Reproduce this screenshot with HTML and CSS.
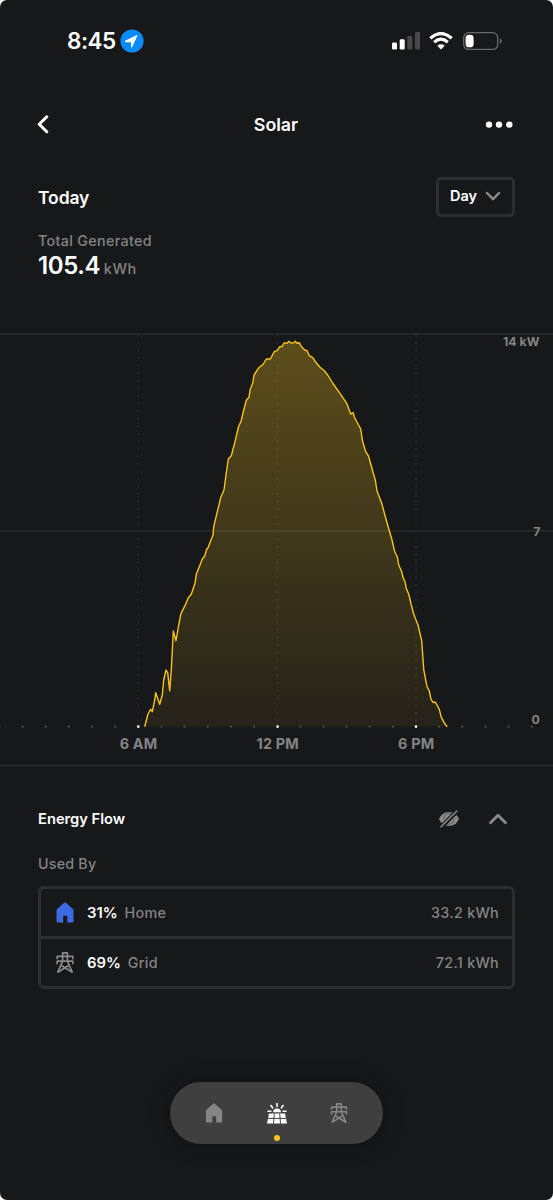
FILE: index.html
```html
<!DOCTYPE html>
<html lang="en">
<head>
    <meta charset="UTF-8">
    <meta name="viewport" content="width=device-width, initial-scale=1.0">
    <title>Solar</title>
    <link rel="stylesheet" href="styles.css">
</head>
<body>
    <!-- shared icons -->
    <svg class="sprite" width="0" height="0">
        <symbol id="icon-home" viewBox="0 0 18 21">
            <path d="M8 .8Q9 0 10 .8L16.900 7Q17.500 7.600 17.500 8.400V19.500Q17.500 20.500 16.500 20.500H11.300V14.500Q11.300 13.800 10.600 13.800H7.900Q7.200 13.800 7.200 14.500V20.500H1.500Q.5 20.500 .5 19.500V8.400Q.5 7.600 1.100 7Z" fill="currentColor"/>
        </symbol>
        <symbol id="icon-grid" viewBox="0 0 18 21">
            <path d="M6.600 9.200V.9H11.400V9.200M1.200 6.600V4.300H16.800V6.600M1.200 11.500V9.200H16.800V11.500M6.600 9.200L1.800 20.200L12.600 13.500M11.400 9.200L16.200 20.200L5.400 13.500" fill="none" stroke="currentColor" stroke-width="1.700" stroke-linejoin="round" stroke-linecap="round"/>
        </symbol>
    </svg>

    <div class="screen">
        <div class="status-bar">
            <div class="status-left">
                <span class="time">8:45</span>
                <svg width="24" height="24" viewBox="0 0 24 24">
                    <circle cx="12" cy="12" r="11.600" fill="#0a8cff"/>
                    <path d="M5.200 11.800L16.400 6.200Q17.800 5.600 17.200 7L12.200 18Q11.300 19.300 11 17.800V13.200H5.700Q4.100 12.800 5.200 11.800Z" fill="#fff"/>
                </svg>
            </div>
            <div class="status-right">
                <svg width="28" height="18" viewBox="0 0 28 18">
                    <rect x="0" y="10.500" width="5" height="7" rx="1.300" fill="#fff"/>
                    <rect x="7.700" y="7.300" width="5" height="10.200" rx="1.300" fill="#fff"/>
                    <rect x="15.300" y="4" width="5" height="13.500" rx="1.300" fill="#48484a"/>
                    <rect x="23" y="0" width="5" height="17.500" rx="1.300" fill="#48484a"/>
                </svg>
                <svg width="24" height="18" viewBox="0 0 24 18">
                    <path d="M1.300 6.200Q12-3.200 22.700 6.200M5.200 10.200Q12 4.200 18.800 10.200" fill="none" stroke="#fff" stroke-width="3.200"/>
                    <path d="M12 17.500L8.300 13.800Q12 10.900 15.700 13.800Z" fill="#fff"/>
                </svg>
                <svg class="battery" width="39" height="18" viewBox="0 0 39 18">
                    <rect x=".7" y=".7" width="34" height="16.800" rx="5" fill="none" stroke="#69696b" stroke-width="1.300"/>
                    <rect x="2.600" y="2.700" width="8" height="12.600" rx="3.400" fill="#fff"/>
                    <path d="M36.800 6.200Q38.800 7.500 38.800 9T36.800 11.900Z" fill="#69696b"/>
                </svg>
            </div>
        </div>

        <div class="nav-bar">
            <svg width="13" height="20" viewBox="0 0 13 20">
                <path d="M9.800 1.800L2.200 9.300L9.800 16.800" fill="none" stroke="#fff" stroke-width="3" stroke-linecap="round" stroke-linejoin="round"/>
            </svg>
            <h1>Solar</h1>
            <svg width="28" height="8" viewBox="0 0 28 8">
                <circle cx="4" cy="3.600" r="3.200" fill="#fff"/>
                <circle cx="14" cy="3.600" r="3.200" fill="#fff"/>
                <circle cx="24.300" cy="3.600" r="3.200" fill="#fff"/>
            </svg>
        </div>

        <div class="period">
            <h2>Today</h2>
            <button class="period-button">
                <span>Day</span>
                <svg width="16" height="11" viewBox="0 0 16 11">
                    <path d="M2 3L8 9.200L14 3" fill="none" stroke="#8a8a8b" stroke-width="2.500" stroke-linecap="round" stroke-linejoin="round"/>
                </svg>
            </button>
        </div>

        <div class="total">
            <div class="total-label">Total Generated</div>
            <div class="total-value">105.4 <span>kWh</span></div>
        </div>

        <svg class="chart" width="553" height="435" viewBox="0 330 553 435">
            <defs>
                <linearGradient id="solar-fill" gradientUnits="userSpaceOnUse" x1="0" y1="341" x2="0" y2="727">
                    <stop offset="0" stop-color="#f7c31c" stop-opacity=".31"/>
                    <stop offset="1" stop-color="#f7c31c" stop-opacity=".06"/>
                </linearGradient>
            </defs>
            <path class="grid-line" d="M0 334H553M0 531H553"/>
            <path class="hour-line" d="M138.300 335.500V724M277.500 335.500V724M416 335.500V724"/>
            <path id="area" fill="url(#solar-fill)"/>
            <path id="line" class="solar-line"/>
            <path class="hour-dots" d="M-.5 726.600H553"/>
            <path class="hour-marks" d="M138.300 726.600h0M277.600 726.600h0M416 726.600h0"/>
            <g class="y-label">
                <text x="539.500" y="346.200">14 kW</text>
                <text x="540.300" y="536">7</text>
                <text x="539.800" y="724.200">0</text>
            </g>
            <g class="x-label">
                <text x="138.500" y="749">6 AM</text>
                <text x="277.700" y="749">12 PM</text>
                <text x="416.200" y="749">6 PM</text>
            </g>
        </svg>

        <div class="energy-flow">
            <div class="flow-header">
                <h3>Energy Flow</h3>
                <div class="flow-actions">
                    <svg width="22" height="18" viewBox="0 0 22 18">
                        <path d="M1 9Q4 2 11 2T21 9Q18 16 11 16T1 9Z" fill="#8a8a8b"/>
                        <path d="M14.700 4.500A5.300 5.300 0 0 0 6 9.500M7.500 13.200A5.300 5.300 0 0 0 16 8.500" fill="none" stroke="#17181a" stroke-width=".4"/>
                        <path d="M3.200 17L19 1.200" stroke="#17181a" stroke-width="4.400"/>
                        <path d="M3 16.800L18.800 1" stroke="#8a8a8b" stroke-width="1.600" stroke-linecap="round"/>
                    </svg>
                    <svg width="20" height="14" viewBox="0 0 20 14">
                        <path d="M2.500 10.800L10 3.200L17.500 10.800" fill="none" stroke="#8a8a8b" stroke-width="2.800" stroke-linecap="round" stroke-linejoin="round"/>
                    </svg>
                </div>
            </div>
            <div class="used-by">Used By</div>
            <div class="flow-list">
                <div class="flow-row">
                    <svg class="flow-icon home" width="18" height="21"><use href="#icon-home"/></svg>
                    <span class="percent">31%</span>
                    <span class="name">Home</span>
                    <span class="amount">33.2 kWh</span>
                </div>
                <div class="flow-row">
                    <svg class="flow-icon" width="18" height="21"><use href="#icon-grid"/></svg>
                    <span class="percent">69%</span>
                    <span class="name">Grid</span>
                    <span class="amount">72.1 kWh</span>
                </div>
            </div>
        </div>

        <div class="tab-bar">
            <svg class="tab" width="18" height="20"><use href="#icon-home"/></svg>
            <div class="tab active">
                <svg width="20" height="21" viewBox="0 0 20 21">
                    <path d="M10 .7V3.400M4 2.500L5.600 4.800M16 2.500L14.400 4.800M1 8.200H3.900M16.100 8.200H19" stroke="#fff" stroke-width="1.600" stroke-linecap="round"/>
                    <path d="M6 9.200Q6.400 5.600 10 5.600T14 9.200Z" fill="#fff"/>
                    <path d="M2 10.500H18L20 20.500H0Z" fill="#fff"/>
                    <path d="M1 15.400H19M7.300 10.500L6.500 20.500M12.700 10.500L13.500 20.500" stroke="#3f3f40" stroke-width="1"/>
                </svg>
                <span class="tab-dot"></span>
            </div>
            <svg class="tab" width="18" height="20"><use href="#icon-grid"/></svg>
        </div>
    </div>

    <script>
        // x, y points of the solar curve
        const points = [
            [144.7, 726.7], [148, 714], [150.7, 709.3], [152.3, 711.7], [154.7, 700], [155.7, 692.7],
            [159.7, 704.3], [162.3, 695], [163.7, 680], [166, 670], [167.7, 672.7], [169.7, 690.7],
            [171.3, 670], [173.3, 631], [176, 640.7], [178.7, 625], [181, 613.3], [185, 605.7],
            [188.3, 597.7], [191.3, 594.3], [195, 583.3], [196.3, 574.3], [200, 565], [202.3, 559],
            [204.7, 556], [206.7, 549.3], [208.3, 547.3], [210.7, 540.7], [213, 535], [213.7, 526.7],
            [217.3, 511.7], [221, 496.7], [224, 490], [226, 475], [228.3, 459], [231.3, 455.7],
            [235, 441.7], [238.7, 426], [241, 421.7], [243.3, 411.7], [246.3, 400.3], [249, 397.3],
            [250.3, 389], [252.7, 383.3], [254, 375], [258.3, 368.3], [263.3, 364], [266.3, 359],
            [270.3, 359], [274.3, 351.7], [277.3, 350.3], [279.3, 347], [282.3, 346.3], [284, 343],
            [287.3, 343], [289, 341.3], [291, 343], [293.7, 342.7], [295.3, 341.3], [297, 343.3],
            [299.3, 342.7], [301.7, 347], [305, 350.3], [307, 350.5], [309.3, 355.7], [312.7, 357.7],
            [316, 362.5], [320, 367.3], [324.3, 370.7], [327.7, 375], [333.3, 384], [340, 393.3],
            [346.7, 403.3], [350.7, 414], [353.3, 412.7], [354.3, 417], [360.7, 429], [362.5, 441],
            [365.7, 451.7], [368.5, 456], [373.3, 473.3], [375.3, 480], [377, 491], [381.7, 503.3],
            [386.7, 521.7], [392, 540], [394.7, 551.7], [397.3, 556.7], [398.7, 565], [401.7, 571.7],
            [403, 577.3], [405, 581.7], [406.3, 588.3], [409, 595], [411.3, 605], [414, 615],
            [418, 625], [421.7, 640.7], [423.7, 669.3], [426, 681.7], [427, 686.7], [429.3, 691],
            [431, 699.3], [433.3, 702.7], [435.3, 702], [439.3, 709.3], [441.3, 717.3],
            [444.7, 723.7], [447.3, 726.7]
        ];
        const path = 'M' + points.map(p => p.join(' ')).join('L');
        document.getElementById('line').setAttribute('d', path);
        document.getElementById('area').setAttribute('d', path + 'Z');
    </script>
</body>
</html>
```
FILE: styles.css
```css
* {
    box-sizing: border-box;
}

body {
    margin: 0;
    background: #fff;
    font-family: 'Inter', sans-serif;
    font-weight: 550;
    color: #fff;
}

h1, h2, h3 {
    margin: 0;
    font-weight: 600;
}

svg {
    display: block;
    flex: none;
}

.sprite {
    display: none;
}

.screen {
    width: 553px;
    height: 1200px;
    display: flex;
    flex-direction: column;
    background: #17181a;
    border-radius: 7px;
    overflow: hidden;
}

.status-bar {
    height: 82px;
    padding: 0 51px 0 67px;
    display: flex;
    justify-content: space-between;
    align-items: center;
}

.status-left {
    display: flex;
    align-items: center;
    gap: 4px;
}

.time {
    font-size: 22.5px;
    font-weight: 600;
    line-height: 28px;
    letter-spacing: -.5px;
}

.status-right {
    display: flex;
    gap: 9px;
}

.battery {
    margin-left: 1px;
}

.nav-bar {
    height: 86px;
    padding: 0 40px 1px 37px;
    display: flex;
    justify-content: space-between;
    align-items: center;
}

h1 {
    font-size: 17.8px;
    line-height: 24px;
    padding: 1px 0 0 17px;
}

.period {
    height: 58px;
    padding: 0 38px;
    display: flex;
    justify-content: space-between;
    align-items: center;
}

h2 {
    font-size: 17.5px;
    letter-spacing: -.1px;
}

.period-button {
    width: 79px;
    height: 40px;
    padding: 0 11px 3px 11px;
    display: flex;
    justify-content: space-between;
    align-items: center;
    background: none;
    border: 3px solid #2d2e30;
    border-radius: 5px;
    font: 600 14.5px 'Inter', sans-serif;
    color: #fff;
}

.total {
    height: 104px;
    padding: 5px 38px 0;
}

.total-label {
    font-size: 14.3px;
    line-height: 20px;
    color: #848485;
    letter-spacing: .33px;
}

.total-value {
    font-size: 24px;
    line-height: 30px;
    font-weight: 600;
    letter-spacing: -.4px;
}

.total-value span {
    margin-left: -2px;
    font-size: 14.5px;
    font-weight: 550;
    letter-spacing: .5px;
    color: #848485;
}

.grid-line {
    stroke: #2b2c2e;
    stroke-width: 1.5;
}

.hour-line {
    stroke: #2d2e30;
    stroke-width: 2;
    stroke-linecap: round;
    stroke-dasharray: 0 7.55;
}

.hour-dots {
    stroke: #4b4c4e;
    stroke-width: 2.4;
    stroke-linecap: round;
    stroke-dasharray: 0 23.14;
}

.hour-marks {
    stroke: #fff;
    stroke-width: 2.6;
    stroke-linecap: round;
}

.solar-line {
    fill: none;
    stroke: #f7c31c;
    stroke-width: 1.4;
    stroke-linejoin: round;
}

.y-label {
    font-size: 12.3px;
    font-weight: 700;
    fill: #848485;
    text-anchor: end;
}

.x-label {
    font-size: 14.4px;
    font-weight: 700;
    letter-spacing: .2px;
    fill: #848485;
    text-anchor: middle;
}

.energy-flow {
    height: 317px;
    border-top: 1px solid #2f3032;
    padding: 42px 38px 0;
}

.flow-header {
    height: 22px;
    display: flex;
    justify-content: space-between;
    align-items: center;
}

h3 {
    font-size: 14.7px;
}

.flow-actions {
    display: flex;
    align-items: center;
    gap: 28px;
    padding-right: 7px;
}

.used-by {
    margin-top: 22px;
    font-size: 14.3px;
    line-height: 24px;
    letter-spacing: .2px;
    color: #848485;
}

.flow-list {
    margin-top: 10px;
    border: 3px solid #2d2e30;
    border-radius: 6px;
}

.flow-row {
    height: 47px;
    padding: 0 13px 0 15px;
    display: flex;
    align-items: center;
    font-size: 14.3px;
}

.flow-row + .flow-row {
    height: 50px;
    border-top: 3px solid #2d2e30;
}

.flow-icon {
    margin-right: 13px;
    color: #8a8a8b;
}

.flow-icon.home {
    color: #3e6ae1;
}

.percent {
    font-size: 14.8px;
    font-weight: 600;
    margin-right: 7px;
}

.name, .amount {
    color: #848485;
    letter-spacing: .3px;
}

.amount {
    margin-left: auto;
}

.tab-bar {
    width: 213px;
    height: 62px;
    margin-left: 170px;
    padding: 0 35px;
    display: flex;
    justify-content: space-between;
    align-items: center;
    background: #3f3f40;
    border-radius: 31px;
    box-shadow: 0 0 20px rgba(0, 0, 0, .35);
}

.tab {
    position: relative;
    color: #858586;
}

.tab-dot {
    position: absolute;
    left: 7px;
    bottom: -17px;
    width: 6px;
    height: 6px;
    border-radius: 50%;
    background: #fcc419;
}
```
